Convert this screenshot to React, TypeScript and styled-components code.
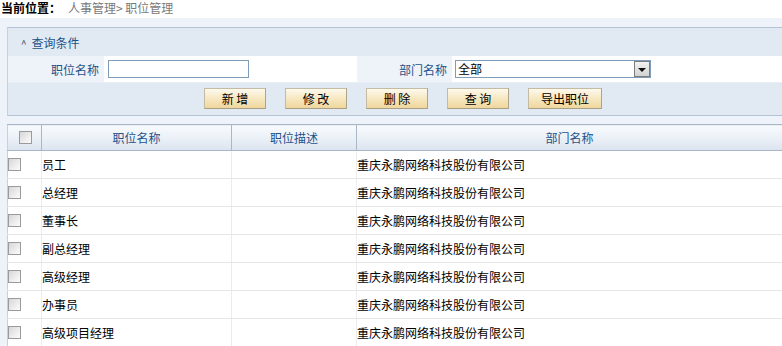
import React from "react";
import styled, { createGlobalStyle } from "styled-components";

const Global = createGlobalStyle`
  html, body { margin: 0; padding: 0; background: #ffffff; }
  body {
    font-family: "Noto Sans CJK SC", "DejaVu Sans", sans-serif;
    font-size: 12px;
    color: #000;
    overflow: hidden;
  }
`;

const Page = styled.div`
  width: 782px;
  height: 346px;
  overflow: hidden;
`;

const Breadcrumb = styled.div`
  height: 18px;
  line-height: 16px;
  padding-left: 1px;
  white-space: nowrap;
`;

const Here = styled.strong`
  font-weight: bold;
  color: #000;
`;

const Path = styled.span`
  color: #7a7a7a;
  margin-left: 7px;
`;

const Main = styled.div`
  background: #eef3f9;
  padding: 9px 0 0 7px;
`;

const Panel = styled.div`
  background: #e1eaf3;
  border-top: 1px solid #b3c3d5;
  border-bottom: 1px solid #b3c3d5;
  border-left: 1px solid #c4d3e3;
`;

const PanelHeader = styled.div`
  height: 28px;
  display: flex;
  align-items: center;
  padding-left: 13px;
  color: #1f5289;
`;

const Caret = styled.span`
  font-size: 10px;
  margin-right: 5px;
  color: #1f3f66;
  position: relative;
  top: 1px;
`;

const FormRow = styled.div`
  height: 26px;
  display: grid;
  grid-template-columns: 96px 253px 95px 1fr;
  align-items: stretch;
`;

const LabelCell = styled.div`
  background: #eef3f9;
  color: #1f5289;
  display: flex;
  align-items: center;
  justify-content: flex-end;
  padding-right: 5px;
`;

const FieldCell = styled.div<{ $pad: number }>`
  background: #ffffff;
  display: flex;
  align-items: center;
  padding-left: ${(p) => p.$pad}px;
`;

const TextInput = styled.input`
  width: 141px;
  height: 18px;
  box-sizing: border-box;
  border: 1px solid #7f9db9;
  background: #fff;
  padding: 0 2px;
  font: inherit;
  outline: none;
`;

const Select = styled.div`
  width: 196px;
  height: 18px;
  box-sizing: border-box;
  border: 1px solid #7f9db9;
  background: #fff;
  display: flex;
  align-items: center;
  justify-content: space-between;
  padding-left: 2px;
  position: relative;
`;

const SelectValue = styled.span`
  line-height: 16px;
`;

const ArrowBox = styled.span`
  width: 16px;
  height: 16px;
  box-sizing: border-box;
  border: 1px solid #7d7d7d;
  background: linear-gradient(#f2f2f2, #d3d3d3);
  display: flex;
  align-items: center;
  justify-content: center;
  &::after {
    content: "";
    border-left: 4px solid transparent;
    border-right: 4px solid transparent;
    border-top: 4px solid #111;
    margin-top: 1px;
  }
`;

const ButtonRow = styled.div`
  height: 33px;
  border-top: 1px solid #e8eef5;
  box-sizing: border-box;
  display: flex;
  align-items: center;
  gap: 19px;
  padding-left: 196px;
  padding-bottom: 2px;
`;

const Button = styled.button<{ $w: number }>`
  width: ${(p) => p.$w}px;
  height: 21px;
  box-sizing: border-box;
  border: 1px solid #c4bba3;
  border-right-color: #aea48a;
  border-bottom-color: #a99f86;
  background: linear-gradient(#fdf9ee 0%, #f8ebc9 40%, #efd69c 100%);
  font-family: "Noto Sans CJK SC", "DejaVu Sans", sans-serif;
  font-size: 12px;
  color: #000;
  padding: 0;
  line-height: 19px;
  cursor: pointer;
`;

const Gap = styled.div`
  height: 8px;
`;

const Table = styled.table`
  width: 775px;
  border-collapse: collapse;
  table-layout: fixed;
  background: #fff;
`;

const HeadCell = styled.th`
  height: 25px;
  padding: 0;
  font-weight: normal;
  color: #1f5289;
  text-align: center;
  background: linear-gradient(#f8fafd 0%, #edf2f8 45%, #dbe4ef 100%);
  border-top: 1px solid #a8b6c6;
  border-bottom: 1px solid #a8b6c6;
  border-left: 1px solid #a9b7c7;
  &:first-child { border-left-color: #c4d3e3; }
`;

const Cell = styled.td`
  height: 27px;
  padding: 0;
  border-bottom: 1px solid #e6e6e6;
  border-left: 1px solid #ececec;
  white-space: nowrap;
  overflow: hidden;
  &:first-child { border-left-color: #c4d3e3; }
`;

const HeadCheckWrap = styled.div`
  display: flex;
  justify-content: center;
  padding-left: 1px;
`;

const Check = styled.span`
  display: block;
  width: 13px;
  height: 13px;
  box-sizing: border-box;
  border: 1px solid #9a9a9a;
  background: linear-gradient(135deg, #d6d6d6 0%, #eeeeee 60%, #fbfbfb 100%);
`;

const rows = ["员工", "总经理", "董事长", "副总经理", "高级经理", "办事员", "高级项目经理"];
const dept = "重庆永鹏网络科技股份有限公司";

const buttons: { label: string; w: number }[] = [
  { label: "新 增", w: 62 },
  { label: "修 改", w: 62 },
  { label: "删 除", w: 62 },
  { label: "查 询", w: 62 },
  { label: "导出职位", w: 74 },
];

export default function App() {
  return (
    <Page>
      <Global />
      <Breadcrumb>
        <Here>当前位置：</Here>
        <Path>人事管理&gt; 职位管理</Path>
      </Breadcrumb>
      <Main>
        <Panel>
          <PanelHeader>
            <Caret>^</Caret>查询条件
          </PanelHeader>
          <FormRow>
            <LabelCell>职位名称</LabelCell>
            <FieldCell $pad={4}>
              <TextInput defaultValue="" />
            </FieldCell>
            <LabelCell>部门名称</LabelCell>
            <FieldCell $pad={3}>
              <Select>
                <SelectValue>全部</SelectValue>
                <ArrowBox />
              </Select>
            </FieldCell>
          </FormRow>
          <ButtonRow>
            {buttons.map((b) => (
              <Button key={b.label} $w={b.w}>
                {b.label}
              </Button>
            ))}
          </ButtonRow>
        </Panel>
        <Gap />
        <Table>
          <colgroup>
            <col style={{ width: 34 }} />
            <col style={{ width: 190 }} />
            <col style={{ width: 125 }} />
            <col />
          </colgroup>
          <thead>
            <tr>
              <HeadCell>
                <HeadCheckWrap>
                  <Check />
                </HeadCheckWrap>
              </HeadCell>
              <HeadCell>职位名称</HeadCell>
              <HeadCell>职位描述</HeadCell>
              <HeadCell>部门名称</HeadCell>
            </tr>
          </thead>
          <tbody>
            {rows.map((r) => (
              <tr key={r}>
                <Cell>
                  <Check />
                </Cell>
                <Cell>{r}</Cell>
                <Cell />
                <Cell>{dept}</Cell>
              </tr>
            ))}
          </tbody>
        </Table>
      </Main>
    </Page>
  );
}
